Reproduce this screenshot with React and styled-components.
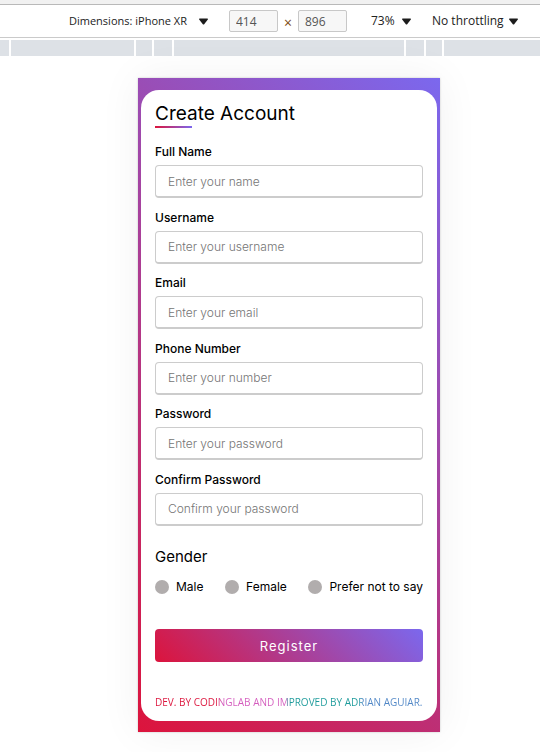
import React, { useState } from "react";
import styled, { createGlobalStyle } from "styled-components";

const GlobalStyle = createGlobalStyle`
  *, *::before, *::after { box-sizing: border-box; }
  body { margin: 0; background: #fff; color: #000; font-family: Inter, sans-serif; }
  input, button, select { font: inherit; color: inherit; }
`;

const TopStrip = styled.div`
  height: 5px;
  background: #f1f1f1;
  border-bottom: 1px solid #b9b9b9;
`;

const Toolbar = styled.header`
  display: flex;
  align-items: center;
  height: 33px;
  padding-left: 69px;
  border-bottom: 1px solid #cacaca;
  font: 12px/16px "Open Sans", sans-serif;
  color: #222;
  white-space: nowrap;
`;

const Picker = styled.label`
  display: flex;
  align-items: center;
  justify-content: space-between;
  width: ${(p) => p.$width};
  margin-right: ${(p) => p.$after || "0"};
  font-size: ${(p) => p.$size || "12px"};
`;

const PickerSelect = styled.select`
  appearance: none;
  flex: 1;
  min-width: 0;
  padding: 0;
  border: 0;
  background: none;
  outline-offset: 2px;
`;

const PickerArrow = styled.svg`
  flex: none;
  width: 9px;
  height: 7px;
  pointer-events: none;
`;

const SizeInput = styled.input`
  width: 49px;
  height: 22px;
  padding: 0 6px;
  border: 1px solid #c8c8c8;
  border-radius: 2px;
  background: #f7f7f7;
  color: #555;
`;

const Times = styled.span`
  width: 20px;
  padding-top: 3px;
  text-align: center;
  font-size: 14px;
  color: #7d4a12;
`;

const ScaleTools = styled.div`
  display: flex;
  margin-left: 24px;
`;

const Ruler = styled.div`
  display: flex;
  gap: 2px;
  height: 16px;
  margin-top: 2px;
`;

const RulerPart = styled.div`
  flex: ${(p) => p.$flex};
  background: #dde1e6;
`;

const Stage = styled.main`
  display: flex;
  justify-content: center;
  padding: 22px 0 20px 38px;
`;

const Device = styled.div`
  display: flex;
  width: 100%;
  max-width: 302px;
  min-height: 654px;
  padding: 12px 3px 11px;
  background: linear-gradient(45deg, #dc143c, #7b68ee);
  box-shadow: 0 0 2px rgba(0, 0, 0, 0.2), 0 0 40px rgba(0, 0, 0, 0.06);
`;

const Card = styled.form`
  display: flex;
  flex-direction: column;
  flex: 1;
  min-width: 0;
  padding: 11px 14px 12px;
  border-radius: 18px;
  background: #fff;
`;

const Title = styled.h1`
  margin: 0;
  font-size: 19px;
  font-weight: 400;
  line-height: 25px;

  &::after {
    content: "";
    display: block;
    width: 37px;
    height: 2px;
    background: linear-gradient(90deg, #dc143c, #7b68ee);
  }
`;

const Fields = styled.div`
  display: flex;
  flex: 1;
  flex-direction: column;
  justify-content: space-between;
  padding: 16px 0 21px;
`;

const Field = styled.label`
  display: flex;
  flex-direction: column;
  gap: 5px;
  font-size: 12px;
  font-weight: 500;
  line-height: 16px;
`;

const TextInput = styled.input`
  width: 100%;
  height: 33px;
  padding: 0 12px;
  border: 1px solid #ccc;
  border-width: 1px 1px 2px;
  border-radius: 4px;
  background: #fff;
  font-size: 12px;
  font-weight: 300;

  &::placeholder { color: #757575; opacity: 1; }
  &:focus { outline: none; border-color: #7b68ee; }
`;

const GenderGroup = styled.fieldset`
  min-width: 0;
  margin: 0;
  padding: 0;
  border: 0;
`;

const GenderTitle = styled.legend`
  padding: 0;
  font-size: 15px;
  line-height: 20px;
`;

const GenderOptions = styled.div`
  display: flex;
  justify-content: space-between;
  padding-top: 12px;
`;

const Option = styled.label`
  display: flex;
  align-items: center;
  gap: 7px;
  font-size: 12px;
  line-height: 16px;
  white-space: nowrap;
`;

const Radio = styled.input`
  appearance: none;
  width: 14px;
  height: 14px;
  margin: 0;
  border-radius: 50%;
  background: #b1adad;

  &:checked { background: #7b68ee; }
`;

const RegisterButton = styled.button`
  height: 33px;
  margin-top: 34px;
  border: 0;
  border-radius: 4px;
  background: linear-gradient(45deg, #dc143c, #7b68ee);
  color: #fff;
  font-size: 13px;
  letter-spacing: 1px;
  cursor: pointer;
`;

const Credit = styled.p`
  align-self: flex-start;
  margin: 33px 0 0;
  font: 10px/14px "Open Sans", sans-serif;
  white-space: nowrap;
  color: transparent;
  background: linear-gradient(90deg, #dc143c 23%, #d45bbd 25%, #d45bbd 49%, #1b9a9a 50%, #1b9a9a 76%, #4f86c6 78%);
  background-clip: text;
`;

const fields = [
  { name: "fullName", label: "Full Name", hint: "Enter your name", type: "text" },
  { name: "username", label: "Username", hint: "Enter your username", type: "text" },
  { name: "email", label: "Email", hint: "Enter your email", type: "email" },
  { name: "phone", label: "Phone Number", hint: "Enter your number", type: "tel" },
  { name: "password", label: "Password", hint: "Enter your password", type: "password" },
  { name: "confirm", label: "Confirm Password", hint: "Confirm your password", type: "password" },
];

const genders = ["Male", "Female", "Prefer not to say"];

const rulerParts = ["0 0 9px", "1 1 27px", "0 0 16px", "0 0 18px", "0 0 230px", "0 0 18px", "0 0 16px", "1 1 0"];

function Dropdown({ label, value, width, after, size }) {
  return (
    <Picker $width={width} $after={after} $size={size}>
      <PickerSelect aria-label={label} defaultValue={value}>
        <option>{value}</option>
      </PickerSelect>
      <PickerArrow viewBox="0 0 9 7" aria-hidden="true">
        <path d="M0 1.2Q0 .5.7.5H8.3Q9 .5 9 1.2L5.2 6.2Q4.5 6.9 3.8 6.2Z" fill="#1c1c1c" />
      </PickerArrow>
    </Picker>
  );
}

export default function App() {
  const [gender, setGender] = useState("");
  return (
    <>
      <GlobalStyle />
      <TopStrip />
      <Toolbar>
        <Dropdown label="Device" value="Dimensions: iPhone XR" width="139px" after="21px" size="11px" />
        <SizeInput aria-label="Width" defaultValue="414" />
        <Times>×</Times>
        <SizeInput aria-label="Height" defaultValue="896" />
        <ScaleTools>
          <Dropdown label="Zoom" value="73%" width="40px" after="21px" />
          <Dropdown label="Throttling" value="No throttling" width="86px" />
        </ScaleTools>
      </Toolbar>
      <Ruler>
        {rulerParts.map((flex, i) => (
          <RulerPart key={i} $flex={flex} />
        ))}
      </Ruler>
      <Stage>
        <Device>
          <Card onSubmit={(e) => e.preventDefault()}>
            <Title>Create Account</Title>
            <Fields>
              {fields.map((f) => (
                <Field key={f.name}>
                  {f.label}
                  <TextInput type={f.type} name={f.name} placeholder={f.hint} />
                </Field>
              ))}
            </Fields>
            <GenderGroup>
              <GenderTitle>Gender</GenderTitle>
              <GenderOptions>
                {genders.map((g) => (
                  <Option key={g}>
                    <Radio type="radio" name="gender" checked={gender === g} onChange={() => setGender(g)} />
                    {g}
                  </Option>
                ))}
              </GenderOptions>
            </GenderGroup>
            <RegisterButton type="submit">Register</RegisterButton>
            <Credit>DEV. BY CODINGLAB AND IMPROVED BY ADRIAN AGUIAR.</Credit>
          </Card>
        </Device>
      </Stage>
    </>
  );
}
